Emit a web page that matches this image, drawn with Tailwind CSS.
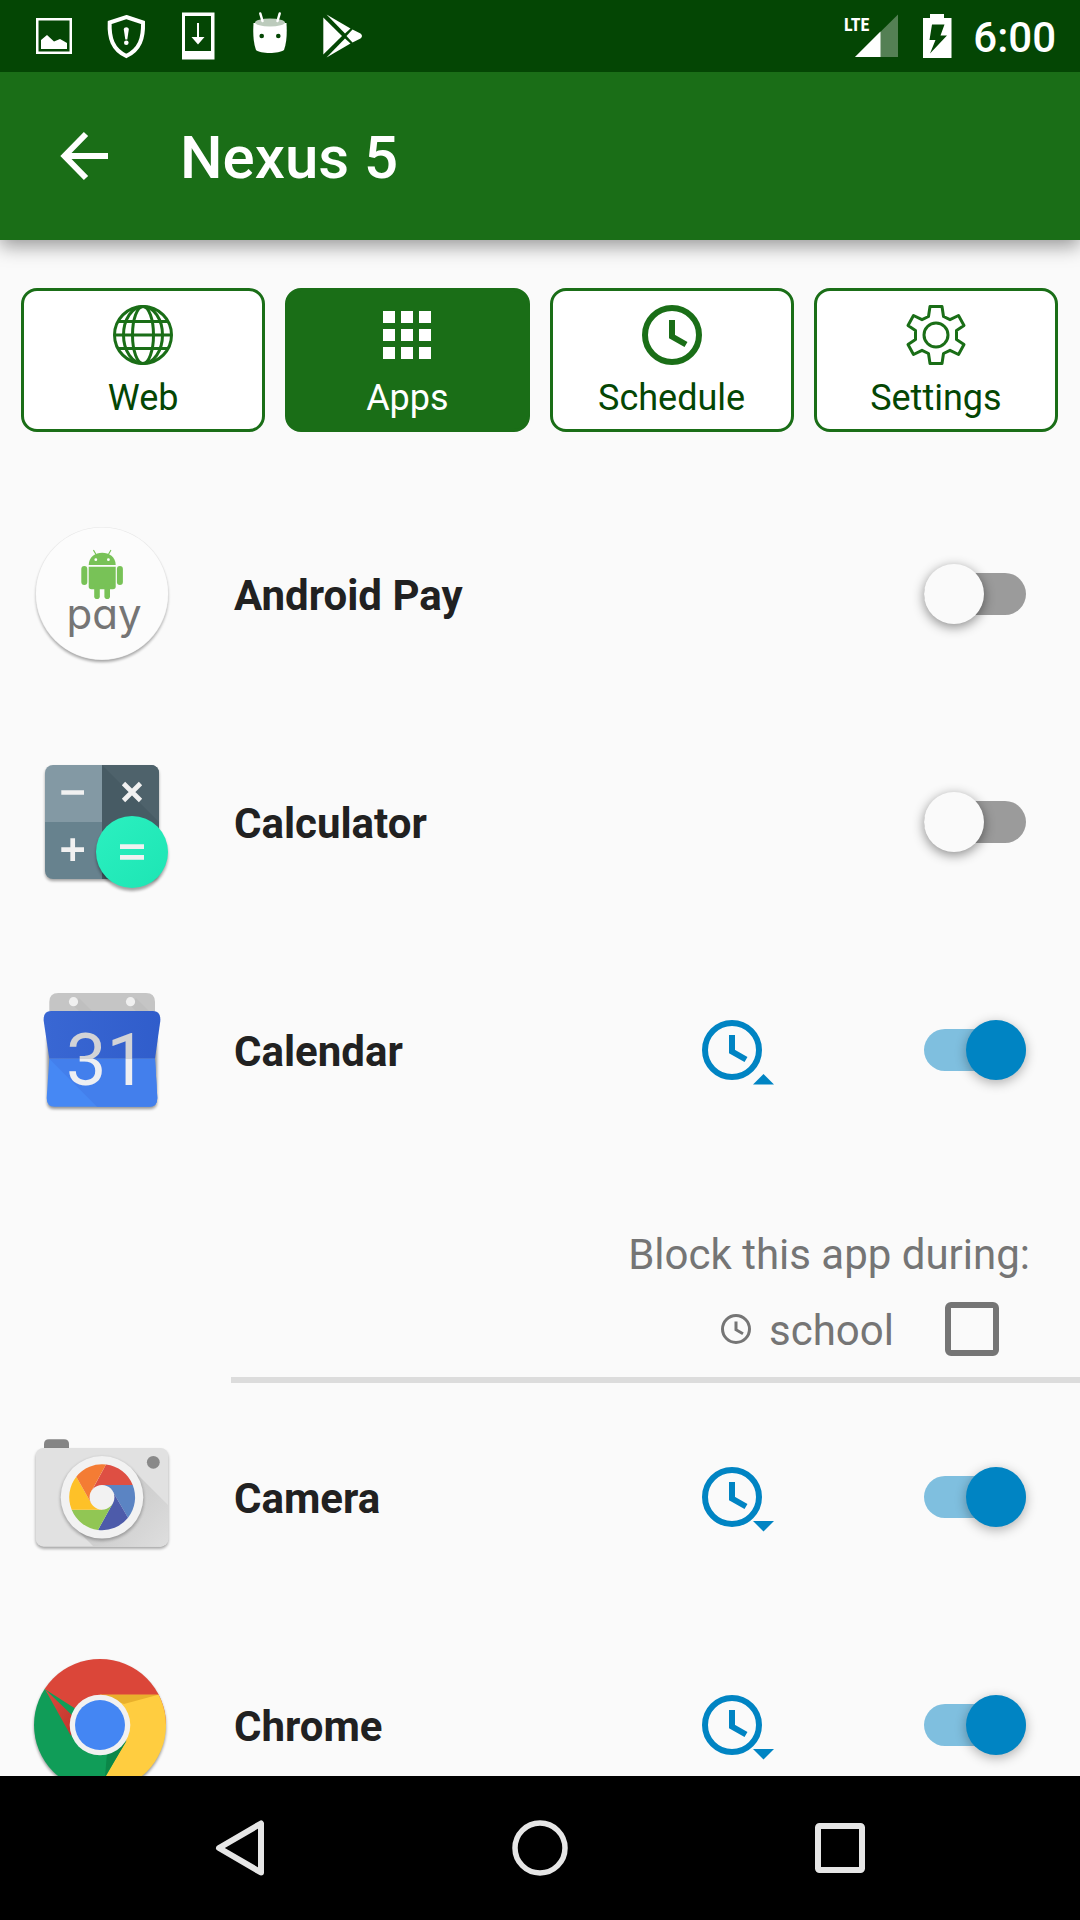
<!DOCTYPE html>
<html lang="en">
<head>
<meta charset="utf-8">
<meta name="viewport" content="width=device-width, initial-scale=1">
<title>Nexus 5</title>
<script src="https://cdn.jsdelivr.net/npm/@tailwindcss/browser@4"></script>
</head>
<body class="flex h-dvh flex-col bg-[#fafafa] font-[Roboto,sans-serif] text-[#212121]">

<!-- Shared icon shapes -->
<svg class="hidden" aria-hidden="true">
  <symbol id="clock" viewBox="0 0 60 60">
    <circle cx="30" cy="30" r="27" fill="none" stroke="currentColor" stroke-width="6"/>
    <path d="M30 15V31.500L44 39.500" fill="none" stroke="currentColor" stroke-width="6"/>
  </symbol>
  <symbol id="clock-down" viewBox="0 0 72 72">
    <circle cx="30" cy="36" r="27" fill="none" stroke="currentColor" stroke-width="6"/>
    <path d="M30 21V37.500L44 45.500" fill="none" stroke="currentColor" stroke-width="6"/>
    <path d="M51 60H72L61.500 70.500Z" fill="currentColor"/>
  </symbol>
  <symbol id="clock-up" viewBox="0 0 72 72">
    <circle cx="30" cy="36" r="27" fill="none" stroke="currentColor" stroke-width="6"/>
    <path d="M30 21V37.500L44 45.500" fill="none" stroke="currentColor" stroke-width="6"/>
    <path d="M51 70.500H72L61.500 60Z" fill="currentColor"/>
  </symbol>
</svg>

<!-- Status bar -->
<div class="relative z-20 flex h-[72px] shrink-0 items-center bg-[#044604] pr-6 pl-[18px] text-white">
  <svg class="size-[72px]" viewBox="0 0 72 72" fill="currentColor" aria-hidden="true">
    <path fill-rule="evenodd" d="M18 18H54V54H18ZM20.500 20.500V51.500H51.500V20.500Z"/>
    <path d="M23 40L29 35L36 41.500L42 39L49 43V49H23Z"/>
  </svg>
  <svg class="size-[72px]" viewBox="0 0 72 72" aria-hidden="true">
    <path d="M36.300 17L53 22.500C53.500 38 50 49.500 36.300 56C22.500 49.500 19 38 19.700 22.500Z" fill="none" stroke="currentColor" stroke-width="4"/>
    <path d="M33.800 29.500C33.800 26.500 38.800 26.500 38.800 29.500L37.300 39.500H35.300Z" fill="currentColor"/>
    <circle cx="36.300" cy="42.700" r="2.300" fill="currentColor"/>
  </svg>
  <svg class="size-[72px]" viewBox="0 0 72 72" fill="currentColor" aria-hidden="true">
    <path fill-rule="evenodd" d="M20 12.500H52.500V59.500H20ZM23 16V51H49V16Z"/>
    <path d="M35 23H37V37H42.500L36 44.500L29.500 37H35Z"/>
  </svg>
  <svg class="size-[72px]" viewBox="0 0 72 72" fill="currentColor" aria-hidden="true">
    <path d="M19.500 23C19 32 19 42 22 50C26 54 45 54 50 50C53 42 53 32 52.500 23Z"/>
    <ellipse cx="36" cy="22.500" rx="15" ry="4" fill="#bccbbc"/>
    <path d="M26.300 13.500L28.500 21M45.700 13.500L43.500 21" fill="none" stroke="currentColor" stroke-width="2.500" stroke-linecap="round"/>
    <circle cx="27.700" cy="36" r="2.300" fill="#044604"/><circle cx="44.300" cy="36" r="2.300" fill="#044604"/>
  </svg>
  <svg class="size-[72px]" viewBox="0 0 72 72" fill="currentColor" aria-hidden="true">
    <path d="M17.300 17.500L36 36L17.300 54.500Z"/>
    <path d="M20.500 14.500L44.500 28.500L39 33.500Z"/>
    <path d="M20.500 57.500L44.500 43.500L39 38.500Z"/>
    <path d="M46.500 29.500L54.500 33.500Q57.500 36 54.500 38.500L46.500 42.500L40.500 36Z"/>
  </svg>
  <div class="ml-auto flex items-center">
    <svg class="h-[72px] w-[54px]" viewBox="0 0 54 72" role="img" aria-label="LTE signal">
      <path d="M54 14.500V57H11Z" fill="#548054"/>
      <path d="M36.500 31.500V57H11Z" fill="#fff"/>
      <text x="0" y="31" class="font-['Roboto_Condensed',Roboto,sans-serif] text-[18px] font-bold" fill="#fff">LTE</text>
    </svg>
    <svg class="ml-6 h-[72px] w-[30px]" viewBox="0 0 30 72" fill="currentColor" aria-hidden="true">
      <path fill-rule="evenodd" d="M8 14H22V18H29.500V58H1V18H8ZM10 24.500L7.500 40H13.500L8 53.500L25 35.500H18.500L22.500 24.500Z"/>
    </svg>
    <span class="ml-[21px] pt-1 text-[42px] leading-[56px] font-medium">6:00</span>
  </div>
</div>

<!-- Toolbar -->
<header class="relative z-10 flex h-[168px] shrink-0 items-center bg-[#1a6e17] pl-12 text-white shadow-[0_6px_18px_rgba(0,0,0,0.4)]">
  <button type="button" aria-label="Back" class="size-[72px]">
    <svg class="size-[72px]" viewBox="0 0 72 72" fill="none" stroke="currentColor" stroke-width="6" aria-hidden="true"><path d="M60 36H17M38 14L16.500 36L38 58"/></svg>
  </button>
  <h1 class="ml-[60px] pt-1 text-[60px] leading-[80px] font-medium">Nexus 5</h1>
</header>

<main class="flex-1 overflow-y-auto [scrollbar-width:none]">

  <!-- Section tabs -->
  <nav class="grid grid-cols-4 gap-5 py-12 pr-[22px] pl-[21px] text-[36px] leading-[42px] text-[#044604]">
    <button type="button" class="flex h-36 flex-col items-center gap-3 rounded-2xl border-3 border-[#1a6e17] bg-white pt-[14px]">
      <svg class="size-[60px] text-[#1a6e17]" viewBox="-30 -30 60 60" fill="none" stroke="currentColor" stroke-width="3" aria-hidden="true">
        <circle r="28.500"/><ellipse rx="10.500" ry="28.500"/><ellipse rx="19.500" ry="28.500"/><path d="M-28 0H28M-25 -13.500H25M-25 13.500H25"/>
      </svg>
      Web
    </button>
    <button type="button" aria-current="page" class="flex h-36 flex-col items-center gap-3 rounded-2xl border-3 border-[#1a6e17] bg-[#1a6e17] pt-[14px] text-white">
      <svg class="size-[60px]" viewBox="0 0 60 60" fill="currentColor" aria-hidden="true">
        <path d="M6 6h12v12H6zM24 6h12v12H24zM42 6h12v12H42zM6 24h12v12H6zM24 24h12v12H24zM42 24h12v12H42zM6 42h12v12H6zM24 42h12v12H24zM42 42h12v12H42z"/>
      </svg>
      Apps
    </button>
    <button type="button" class="flex h-36 flex-col items-center gap-3 rounded-2xl border-3 border-[#1a6e17] bg-white pt-[14px]">
      <svg class="size-[60px] text-[#1a6e17]" aria-hidden="true"><use href="#clock"/></svg>
      Schedule
    </button>
    <button type="button" class="flex h-36 flex-col items-center gap-3 rounded-2xl border-3 border-[#1a6e17] bg-white pt-[14px]">
      <svg class="size-[60px] text-[#1a6e17]" viewBox="-30 -30 60 60" fill="none" stroke="currentColor" stroke-width="3" stroke-linejoin="round" aria-hidden="true">
        <path d="M-6 -28.500H6L7.500 -18.500L14 -15.300L22.500 -19.500L28 -9.500L20.500 -4.500V4.500L28 9.500L22.500 19.500L14 15.300L7.500 18.500L6 28.500H-6L-7.500 18.500L-14 15.300L-22.500 19.500L-28 9.500L-20.500 4.500V-4.500L-28 -9.500L-22.500 -19.500L-14 -15.300L-7.500 -18.500Z"/>
        <circle r="12"/>
      </svg>
      Settings
    </button>
  </nav>

  <!-- App list -->
  <ul>
    <li class="flex h-[228px] items-center pr-[54px] pl-[30px]">
      <svg class="size-36 shrink-0" viewBox="0 0 144 144" aria-hidden="true">
        <defs><filter id="soft" x="-20%" y="-20%" width="140%" height="140%"><feGaussianBlur stdDeviation="1.800"/></filter></defs>
        <circle cx="72" cy="74" r="66" fill="#000" opacity=".35" filter="url(#soft)"/>
        <circle cx="72" cy="71.500" r="66.500" fill="#e6e6e6"/>
        <circle cx="72" cy="71.500" r="66" fill="#fcfcfc"/>
        <g fill="#78c257">
          <path d="M58.700 43C58.700 26.600 85.700 26.600 85.700 43Z"/>
          <path d="M58.700 44.700H85.700V64.500Q85.700 67.300 82.900 67.300H61.500Q58.700 67.300 58.700 64.500Z"/>
          <rect x="51.300" y="44" width="6" height="19" rx="3"/><rect x="86.900" y="44" width="6" height="19" rx="3"/>
          <rect x="64.200" y="62" width="5.600" height="15" rx="2.800"/><rect x="74.400" y="62" width="5.600" height="15" rx="2.800"/>
        </g>
        <path d="M63.700 28.500L66 32.500M80.700 28.500L78.400 32.500" stroke="#78c257" stroke-width="1.200" stroke-linecap="round"/>
        <circle cx="65.800" cy="37.700" r="1.400" fill="#fff"/><circle cx="78.400" cy="37.700" r="1.400" fill="#fff"/>
        <text x="74" y="107" text-anchor="middle" fill="#757575" class="font-[Inter,Lato,sans-serif] text-[42px] [font-feature-settings:'cv11']">pay</text>
      </svg>
      <label for="pay" class="ml-[60px] flex-1 pt-1 text-[42px] leading-[56px] font-bold">Android Pay</label>
      <input id="pay" type="checkbox" role="switch" class="relative h-[60px] w-[102px] shrink-0 appearance-none before:absolute before:inset-x-0 before:top-[9px] before:h-[42px] before:rounded-full before:bg-[#9b9b9b] after:absolute after:left-0 after:size-[60px] after:rounded-full after:bg-[#fafafa] after:shadow-[0_3px_12px_rgba(0,0,0,0.45)] checked:before:bg-[#7fbfdf] checked:after:left-[42px] checked:after:bg-[#0084c3]">
    </li>

    <li class="flex h-[228px] items-center pr-[54px] pl-[30px]">
      <svg class="size-36 shrink-0" viewBox="0 0 144 144" aria-hidden="true">
        <defs>
          <clipPath id="calc-body"><rect x="15" y="15" width="114" height="114" rx="8"/></clipPath>
          <linearGradient id="mint" x1="0" y1="0" x2="1" y2="1"><stop offset="0" stop-color="#2bf0c0"/><stop offset="1" stop-color="#1de5b4"/></linearGradient>
        </defs>
        <rect x="15" y="17" width="114" height="114" rx="8" opacity=".35" filter="url(#soft)"/>
        <g clip-path="url(#calc-body)">
          <path d="M15 15H72V72H15Z" fill="#8399a4"/>
          <path d="M15 72H72V129H15Z" fill="#67828e"/>
          <path d="M72 15H129V129H72Z" fill="#475b64"/>
          <path d="M72 15H129V72Z" fill="#4e626b"/>
        </g>
        <circle cx="102" cy="105" r="36" opacity=".35" filter="url(#soft)"/>
        <circle cx="102" cy="102" r="36" fill="url(#mint)"/>
        <path d="M31.300 42.500H54M31.300 99.700H54M42.700 88.300V111M90 96.600H114M90 107.400H114M93.500 33.500L110.500 50.500M110.500 33.500L93.500 50.500" stroke="#f1f1f1" stroke-width="4.700"/>
      </svg>
      <label for="calculator" class="ml-[60px] flex-1 pt-1 text-[42px] leading-[56px] font-bold">Calculator</label>
      <input id="calculator" type="checkbox" role="switch" class="relative h-[60px] w-[102px] shrink-0 appearance-none before:absolute before:inset-x-0 before:top-[9px] before:h-[42px] before:rounded-full before:bg-[#9b9b9b] after:absolute after:left-0 after:size-[60px] after:rounded-full after:bg-[#fafafa] after:shadow-[0_3px_12px_rgba(0,0,0,0.45)] checked:before:bg-[#7fbfdf] checked:after:left-[42px] checked:after:bg-[#0084c3]">
    </li>

    <li>
      <div class="flex h-[228px] items-center pr-[54px] pl-[30px]">
        <svg class="size-36 shrink-0" viewBox="0 0 144 144" aria-hidden="true">
          <defs>
            <linearGradient id="digits" gradientUnits="userSpaceOnUse" x1="0" y1="0" x2="0" y2="144"><stop offset=".56" stop-color="#d2d3d6"/><stop offset=".56" stop-color="#eeeff2"/></linearGradient>
            <linearGradient id="cal-top" x1="0" y1="0" x2="1" y2="0"><stop offset="0" stop-color="#3967d3"/><stop offset="1" stop-color="#305dcb"/></linearGradient>
          </defs>
          <path d="M17 60H127V124Q127 131 120 131H24Q17 131 17 124Z" opacity=".4" filter="url(#soft)"/>
          <path d="M19.300 36V24Q19.300 15 28.300 15H116Q125 15 125 24V36Z" fill="#c5c5c5"/>
          <path d="M44 28L49 20L62 33H49ZM101 28L106 20L119 33H106Z" fill="#bfbfbf"/>
          <circle cx="43.500" cy="23.700" r="4.600" fill="#f0f0f0"/><circle cx="100.500" cy="23.700" r="4.600" fill="#f0f0f0"/>
          <path d="M19.300 80.700L13.700 43Q13 33 21 33H123Q131 33 130.300 43L125 80.700Z" fill="url(#cal-top)"/>
          <path d="M19.300 80.700H125L127.300 120Q127.300 128.700 119.500 128.700H24.500Q16.700 128.700 16.700 120Z" fill="#4688f4"/>
          <path d="M19.300 80.700H125L127.300 120Q127.300 128.700 119.500 128.700H67Z" fill="#437fec"/>
          <text x="36" y="106.500" fill="url(#digits)" class="text-[72px] font-normal">31</text>
        </svg>
        <label for="calendar" class="ml-[60px] flex-1 pt-1 text-[42px] leading-[56px] font-bold">Calendar</label>
        <button type="button" aria-label="Hide schedule" aria-expanded="true" class="mr-[150px] size-[72px] text-[#0084c3]"><svg class="size-[72px]" aria-hidden="true"><use href="#clock-up"/></svg></button>
        <input id="calendar" type="checkbox" role="switch" checked class="relative h-[60px] w-[102px] shrink-0 appearance-none before:absolute before:inset-x-0 before:top-[9px] before:h-[42px] before:rounded-full before:bg-[#9b9b9b] after:absolute after:left-0 after:size-[60px] after:rounded-full after:bg-[#fafafa] after:shadow-[0_3px_12px_rgba(0,0,0,0.3)] checked:before:bg-[#7fbfdf] checked:after:left-[42px] checked:after:bg-[#0084c3]">
      </div>
      <div class="ml-[231px] flex flex-col items-end border-b-6 border-[#dcdcdc] pt-[63px] pb-[21px] text-[42px] leading-[56px] text-[#757575]">
        <p class="pr-[50px]">Block this app during:</p>
        <div class="mt-[19px] flex h-[54px] items-center pr-[81px]">
          <svg class="mr-[18px] size-[30px]" aria-hidden="true"><use href="#clock"/></svg>
          <label for="school" class="mr-[51px] pt-1">school</label>
          <input id="school" type="checkbox" class="size-[54px] appearance-none rounded-md border-6 border-[#757575] checked:bg-[#757575]">
        </div>
      </div>
    </li>

    <li class="flex h-[228px] items-center pr-[54px] pl-[30px]">
      <svg class="size-36 shrink-0" viewBox="0 0 144 144" aria-hidden="true">
        <defs>
          <clipPath id="cam-body"><rect x="5.700" y="23" width="132.600" height="98.700" rx="8"/></clipPath>
          <linearGradient id="cam-fade" x1="0" y1="0" x2="1" y2="1"><stop offset="0.200" stop-color="#c6c6c6"/><stop offset=".8" stop-color="#e1e1e1"/></linearGradient>
        </defs>
        <path d="M14 24V19Q14 14.300 19 14.300H34Q39 14.300 39 19V24Z" fill="#858585"/>
        <rect x="5.700" y="25" width="132.600" height="98.700" rx="8" opacity=".35" filter="url(#soft)"/>
        <rect x="5.700" y="23" width="132.600" height="98.700" rx="8" fill="#e1e1e1"/>
        <path d="M101 43L160 102L104 162L43 101Z" fill="url(#cam-fade)" clip-path="url(#cam-body)"/>
        <circle cx="72" cy="74" r="42" opacity=".25" filter="url(#soft)"/>
        <circle cx="72" cy="72.300" r="41.300" fill="#f2f2f2"/>
        <path d="M76 39.500L64.900 60L61.350 66.150L72 72.300V60H102.700A33 33 0 0 0 76 39.500Z" fill="#de4f43"/>
        <path d="M102.700 60H72V72.300L82.650 66.150L98 92.700A33 33 0 0 0 102.700 60Z" fill="#5b84c3"/>
        <path d="M98 92.700L82.650 66.150L72 72.300L82.650 78.450L68 105A33 33 0 0 0 98 92.700Z" fill="#4d5baa"/>
        <path d="M68 105L82.650 78.450L72 72.300V84.700H41.700A33 33 0 0 0 68 105Z" fill="#91c654"/>
        <path d="M41.700 84.700H72V72.300L61.350 78.450L46.300 51.700A33 33 0 0 0 41.700 84.700Z" fill="#fec128"/>
        <path d="M46.300 51.700L61.350 78.450L72 72.300L61.350 66.150L76 39.500A33 33 0 0 0 46.300 51.700Z" fill="#f47c34"/>
        <circle cx="72" cy="72.300" r="12.400" fill="#f2f2f2"/>
        <circle cx="123.300" cy="37.300" r="6.400" fill="#898989"/>
      </svg>
      <label for="camera" class="ml-[60px] flex-1 pt-1 text-[42px] leading-[56px] font-bold">Camera</label>
      <button type="button" aria-label="Show schedule" aria-expanded="false" class="mr-[150px] size-[72px] text-[#0084c3]"><svg class="size-[72px]" aria-hidden="true"><use href="#clock-down"/></svg></button>
      <input id="camera" type="checkbox" role="switch" checked class="relative h-[60px] w-[102px] shrink-0 appearance-none before:absolute before:inset-x-0 before:top-[9px] before:h-[42px] before:rounded-full before:bg-[#9b9b9b] after:absolute after:left-0 after:size-[60px] after:rounded-full after:bg-[#fafafa] after:shadow-[0_3px_12px_rgba(0,0,0,0.3)] checked:before:bg-[#7fbfdf] checked:after:left-[42px] checked:after:bg-[#0084c3]">
    </li>

    <li class="flex h-[228px] items-center pr-[54px] pl-[30px]">
      <svg class="size-36 shrink-0" viewBox="0 0 144 144" aria-hidden="true">
        <defs>
          <clipPath id="disc"><circle cx="70" cy="72" r="66"/></clipPath>
          <linearGradient id="red-shade" x1="0" y1="0" x2="1" y2="1"><stop offset="0" stop-color="#db4a3e"/><stop offset="1" stop-color="#bf342b"/></linearGradient>
        </defs>
        <circle cx="70" cy="74" r="66" opacity=".4" filter="url(#soft)"/>
        <g clip-path="url(#disc)">
          <path d="M0 0H144V72L70 72L41 83L15 36.300L0 10Z" fill="#db4639"/>
          <path d="M15 36.300L41.500 84L0 144H80L95 90L70 102L41 83L15 36.300L0 10V144H64L96 88Z" fill="#109d58"/>
          <path d="M70 41.700H144V144H64L96.500 87Z" fill="#ffcd40"/>
          <path d="M15 36.300L46 66L41 83Z" fill="url(#red-shade)"/>
          <path d="M70 41.700H128.300L94 51Z" fill="#e9b02c"/>
          <path d="M77 100L96.500 88L75 124Z" fill="#0b8748"/>
        </g>
        <circle cx="70" cy="72" r="30.300" fill="#f1f1f1"/>
        <circle cx="70" cy="72" r="25" fill="#4486f3"/>
      </svg>
      <label for="chrome" class="ml-[60px] flex-1 pt-1 text-[42px] leading-[56px] font-bold">Chrome</label>
      <button type="button" aria-label="Show schedule" aria-expanded="false" class="mr-[150px] size-[72px] text-[#0084c3]"><svg class="size-[72px]" aria-hidden="true"><use href="#clock-down"/></svg></button>
      <input id="chrome" type="checkbox" role="switch" checked class="relative h-[60px] w-[102px] shrink-0 appearance-none before:absolute before:inset-x-0 before:top-[9px] before:h-[42px] before:rounded-full before:bg-[#9b9b9b] after:absolute after:left-0 after:size-[60px] after:rounded-full after:bg-[#fafafa] after:shadow-[0_3px_12px_rgba(0,0,0,0.3)] checked:before:bg-[#7fbfdf] checked:after:left-[42px] checked:after:bg-[#0084c3]">
    </li>
  </ul>
</main>

<!-- System navigation -->
<footer class="grid h-36 shrink-0 grid-cols-3 place-items-center bg-black px-[90px] text-[#e6e6e6]">
  <button type="button" aria-label="System back" class="size-[72px]"><svg class="size-[72px]" viewBox="0 0 72 72" fill="none" stroke="currentColor" stroke-width="6" stroke-linejoin="round" aria-hidden="true"><path d="M57 11.500V60.500L15 36Z"/></svg></button>
  <button type="button" aria-label="Home" class="size-[72px]"><svg class="size-[72px]" viewBox="0 0 72 72" fill="none" stroke="currentColor" stroke-width="5.500" aria-hidden="true"><circle cx="36" cy="36" r="25"/></svg></button>
  <button type="button" aria-label="Recent apps" class="size-[72px]"><svg class="size-[72px]" viewBox="0 0 72 72" fill="none" stroke="currentColor" stroke-width="6" aria-hidden="true"><rect x="14" y="14" width="44" height="44" rx="1.500"/></svg></button>
</footer>
</body>
</html>
